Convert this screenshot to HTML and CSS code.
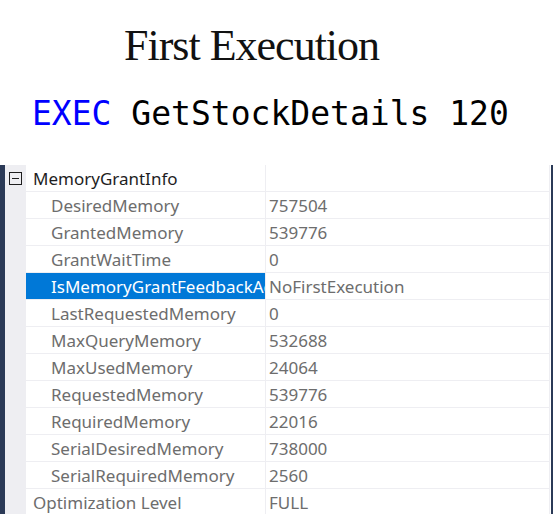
FILE: index.html
```html
<!DOCTYPE html>
<html>
<head>
<meta charset="utf-8">
<link rel="stylesheet" href="styles.css">
</head>
<body>
<div class="header">
  <h1 class="title">First Execution</h1>
  <div class="code"><span class="kw">EXEC</span> GetStockDetails 120</div>
</div>
<div class="grid">
  <div class="row parent">
    <div class="gutter"><span class="toggle"></span></div>
    <div class="name">MemoryGrantInfo</div>
    <div class="value"></div>
  </div>
  <div class="row child">
    <div class="gutter"></div>
    <div class="name">DesiredMemory</div>
    <div class="value">757504</div>
  </div>
  <div class="row child">
    <div class="gutter"></div>
    <div class="name">GrantedMemory</div>
    <div class="value">539776</div>
  </div>
  <div class="row child">
    <div class="gutter"></div>
    <div class="name">GrantWaitTime</div>
    <div class="value">0</div>
  </div>
  <div class="row child selected">
    <div class="gutter"></div>
    <div class="name">IsMemoryGrantFeedbackAdjusted</div>
    <div class="value">NoFirstExecution</div>
  </div>
  <div class="row child">
    <div class="gutter"></div>
    <div class="name">LastRequestedMemory</div>
    <div class="value">0</div>
  </div>
  <div class="row child">
    <div class="gutter"></div>
    <div class="name">MaxQueryMemory</div>
    <div class="value">532688</div>
  </div>
  <div class="row child">
    <div class="gutter"></div>
    <div class="name">MaxUsedMemory</div>
    <div class="value">24064</div>
  </div>
  <div class="row child">
    <div class="gutter"></div>
    <div class="name">RequestedMemory</div>
    <div class="value">539776</div>
  </div>
  <div class="row child">
    <div class="gutter"></div>
    <div class="name">RequiredMemory</div>
    <div class="value">22016</div>
  </div>
  <div class="row child">
    <div class="gutter"></div>
    <div class="name">SerialDesiredMemory</div>
    <div class="value">738000</div>
  </div>
  <div class="row child">
    <div class="gutter"></div>
    <div class="name">SerialRequiredMemory</div>
    <div class="value">2560</div>
  </div>
  <div class="row top">
    <div class="gutter"></div>
    <div class="name">Optimization Level</div>
    <div class="value">FULL</div>
  </div>
</div>
</body>
</html>
```
FILE: styles.css
```css
html, body {
  margin: 0;
  padding: 0;
  background: #ffffff;
  overflow: hidden;
}
.header {
  height: 165px;
  display: flex;
  flex-direction: column;
}
.title {
  margin: 0;
  padding: 21px 0 0 124px;
  font-family: "Liberation Serif", serif;
  font-weight: normal;
  font-size: 44px;
  letter-spacing: -1px;
  line-height: 50px;
  color: #111111;
}
.code {
  margin-top: 23px;
  padding-left: 32px;
  font-family: "DejaVu Sans Mono", monospace;
  font-size: 33px;
  line-height: 40px;
  color: #000000;
}
.kw {
  color: #0000ff;
}
.grid {
  border-left: 5px solid #2b3a57;
  border-right: 2px solid #2b3a57;
  padding-right: 1px;
  font-family: "Noto Sans", sans-serif;
  font-size: 17px;
}
.row {
  display: grid;
  grid-template-columns: 21px 240px 1fr;
  height: 27px;
}
.gutter {
  background: #eeeef2;
  display: flex;
  align-items: center;
  padding-left: 4px;
}
.toggle {
  width: 11px;
  height: 11px;
  border: 1px solid #1e1e1e;
  position: relative;
  box-sizing: content-box;
}
.toggle::after {
  content: "";
  position: absolute;
  left: 2px;
  right: 2px;
  top: 5px;
  height: 1px;
  background: #1e1e1e;
}
.name, .value {
  border-bottom: 1px solid #eeeef2;
  display: flex;
  align-items: center;
  white-space: nowrap;
  overflow: hidden;
  color: #6d6d6d;
}
.name {
  border-right: 1px solid #eeeef2;
}
.value {
  padding-left: 3px;
  border-right: 1px solid #eeeef2;
}
.parent .name {
  padding-left: 7px;
  color: #1e1e1e;
}
.child .name {
  padding-left: 25px;
}
.top .name {
  padding-left: 7px;
  color: #6d6d6d;
}
.selected .name {
  background: #0078d7;
  color: #ffffff;
}
```
